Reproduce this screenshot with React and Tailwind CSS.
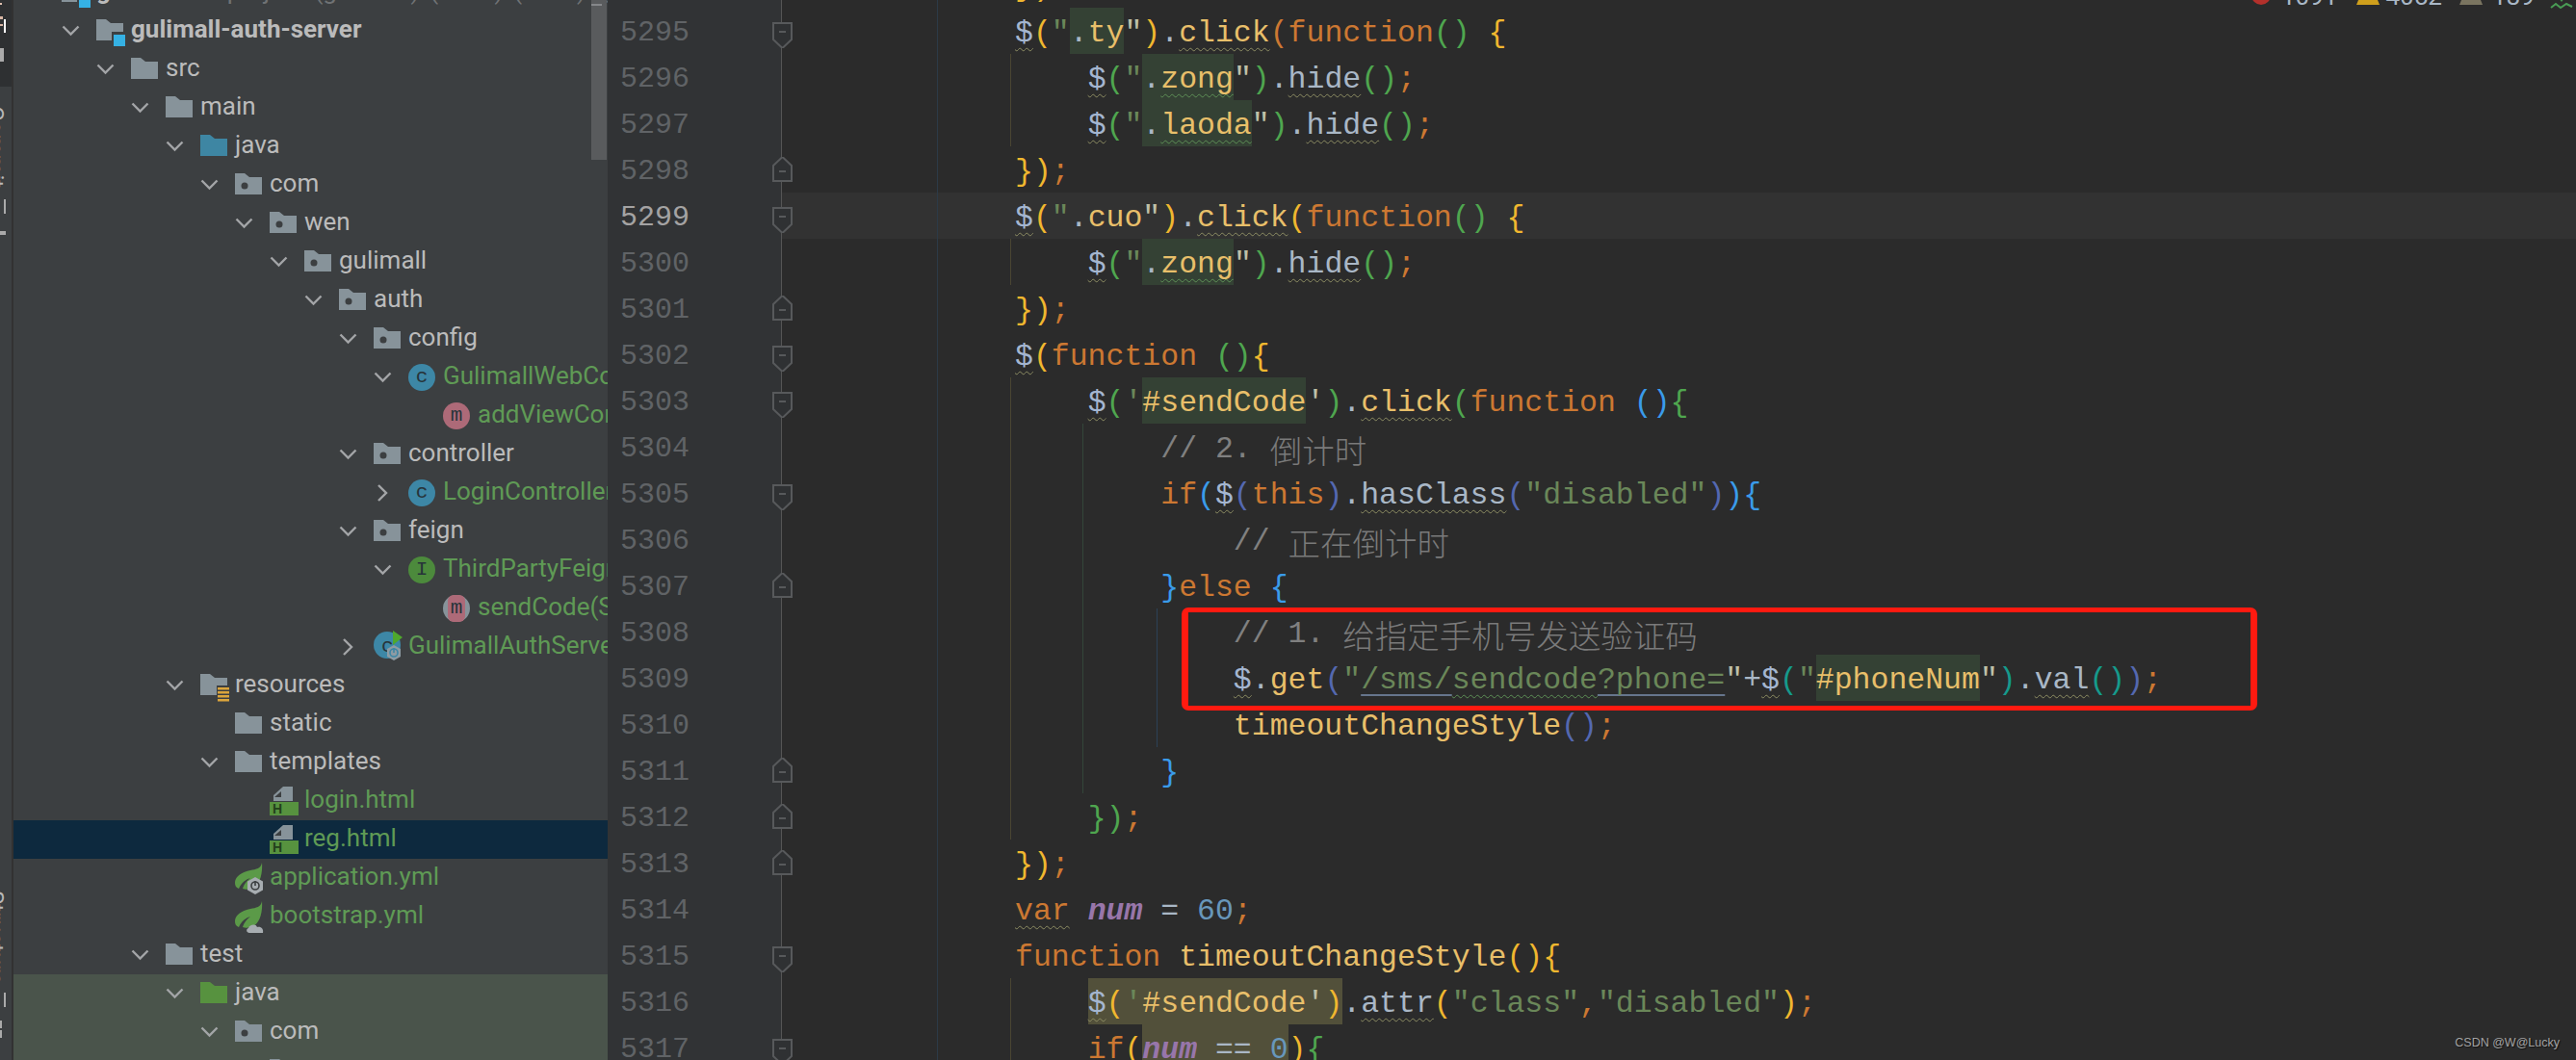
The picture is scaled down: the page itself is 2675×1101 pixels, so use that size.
import React from "react";

// tree: [level, name, icon, chevron, tone]
const tree = [
  [1, "src", "folder", "down"],
  [2, "main", "folder", "down"],
  [3, "java", "source", "down"],
  [4, "com", "pkg", "down"],
  [5, "wen", "pkg", "down"],
  [6, "gulimall", "pkg", "down"],
  [7, "auth", "pkg", "down"],
  [8, "config", "pkg", "down"],
  [9, "GulimallWebConfig", "class", "down", "green"],
  [10, "addViewControllers", "method", null, "green"],
  [8, "controller", "pkg", "down"],
  [9, "LoginController", "class", "right", "green"],
  [8, "feign", "pkg", "down"],
  [9, "ThirdPartyFeignService", "iface", "down", "green"],
  [10, "sendCode(String)", "absmethod", null, "green"],
  [8, "GulimallAuthServerApplication", "boot", "right", "green"],
  [3, "resources", "res", "down"],
  [4, "static", "folder", null],
  [4, "templates", "folder", "down"],
  [5, "login.html", "html", null, "green"],
  [5, "reg.html", "html", null, "green", "selected"],
  [4, "application.yml", "leafpower", null, "green"],
  [4, "bootstrap.yml", "leafcloud", null, "green"],
  [2, "test", "folder", "down"],
  [3, "java", "testsrc", "down", null, "test"],
  [4, "com", "pkg", "down", null, "test"],
  [5, "wen", "pkg", "down", null, "test"],
];

function Folder({ fill = "#87939a", children }) {
  return (
    <svg width="28" height="22" viewBox="0 0 28 22" className="-mt-[2px] overflow-visible">
      <path d="M0 0h10l5 4h13v18H0z" fill={fill} />
      {children}
    </svg>
  );
}

function Badge({ bg, letter, font = "text-[21px]" }) {
  return (
    <div className={`flex h-[28px] w-[28px] items-center justify-center rounded-full ${bg} ${font} font-['Liberation_Mono'] text-[#27343a]`}>
      {letter}
    </div>
  );
}

function Leaf({ children }) {
  return (
    <svg width="30" height="32" viewBox="0 0 30 32" className="overflow-visible">
      <path d="M28 0c-1 6-6 7-12 8C6 10 0 15 0 21c0 3 1 5 4 6 2-5 6-9 12-11-4 3-7 7-8 11 3 1 7 1 11-1 6-3 10-13 9-26z" fill="#5b9a48" />
      {children}
    </svg>
  );
}

function TreeIcon({ type }) {
  if (type === "folder") return <Folder />;
  if (type === "source") return <Folder fill="#3e86a3" />;
  if (type === "testsrc") return <Folder fill="#57923f" />;
  if (type === "pkg")
    return (
      <Folder>
        <circle cx="10" cy="13" r="3.500" fill="#3c3f41" />
      </Folder>
    );
  if (type === "res")
    return (
      <Folder>
        <path d="M17 12h13v12H17z" fill="#3c3f41" />
        <path d="M18 14h12v2.500H18zM18 18h12v2.500H18zM18 22h12v2.500H18zM18 26h12v2.500H18z" fill="#dba53c" />
      </Folder>
    );
  if (type === "class") return <Badge bg="bg-[#3d87a6]" letter="c" />;
  if (type === "method") return <Badge bg="bg-[#ad6a78]" letter="m" />;
  if (type === "iface") return <Badge bg="bg-[#4c8a3c]" letter="I" />;
  if (type === "absmethod")
    return (
      <div className="flex h-[28px] w-[28px] justify-center rounded-full bg-[#87939a]">
        <div className="flex h-[28px] w-[18px] items-center justify-center rounded-[6px] bg-[#ad6a78] font-['Liberation_Mono'] text-[21px] text-[#27343a]">m</div>
      </div>
    );
  if (type === "boot")
    return (
      <svg width="30" height="34" viewBox="0 0 30 34" className="overflow-visible">
        <circle cx="14" cy="15" r="14" fill="#3d87a6" />
        <text x="8" y="22" fontSize="21" fontFamily="Liberation Mono" fill="#27343a">c</text>
        <path d="M20 0l10 7-10 8z" fill="#4fa82d" />
        <path d="M21 15l7 4v8l-7 4-7-4v-8z" fill="#8d9ba3" />
        <circle cx="21" cy="23" r="4" fill="none" stroke="#3d87a6" strokeWidth="1.6" />
        <path d="M21 18v5" stroke="#3d87a6" strokeWidth="1.6" />
      </svg>
    );
  if (type === "html")
    return (
      <svg width="30" height="30" viewBox="0 0 30 30" className="overflow-visible">
        <path d="M14 0h10v15H4V9z" fill="#87939a" />
        <path d="M12 5v6H5z" fill="#3c3f41" />
        <path d="M0 16h30v14H0z" fill="#57923f" />
        <text x="3" y="28" fontSize="14" fontWeight="700" fontFamily="Liberation Sans" fill="#23401c">H</text>
      </svg>
    );
  if (type === "leafpower")
    return (
      <Leaf>
        <path d="M21 15l8 4.500v9l-8 4.500-8-4.500v-9z" fill="#a7adb1" />
        <circle cx="21" cy="24" r="4" fill="none" stroke="#3c3f41" strokeWidth="1.6" />
        <path d="M21 19v5" stroke="#3c3f41" strokeWidth="1.6" />
      </Leaf>
    );
  return (
    <Leaf>
      <path d="M15 33c-3 0-4-4-1-5 1-4 8-5 9-1 4-1 7 2 6 6z" fill="#a7adb1" />
    </Leaf>
  );
}

function Chevron({ dir }) {
  if (dir === "down")
    return (
      <svg width="19" height="12" viewBox="0 0 19 12">
        <path d="M1.500 1.500l8 8 8-8" fill="none" stroke="#a3a5a7" strokeWidth="2.400" />
      </svg>
    );
  return (
    <svg width="19" height="18" viewBox="0 0 19 18">
      <path d="M5 1l8 8-8 8" fill="none" stroke="#a3a5a7" strokeWidth="2.400" />
    </svg>
  );
}

function TreeRow({ row }) {
  const [level, name, icon, chevron, tone, state] = row;
  let bg = "";
  if (state === "selected") bg = "bg-[#0d293e]";
  if (state === "test") bg = "bg-[#4a544b]";
  return (
    <div className={`flex h-[40px] shrink-0 items-center whitespace-pre ${bg}`} style={{ paddingLeft: 50 + level * 36 }}>
      <div className="flex w-[36px] shrink-0 items-center">{chevron && <Chevron dir={chevron} />}</div>
      <div className="flex w-[36px] shrink-0 items-center">
        <TreeIcon type={icon} />
      </div>
      <span className={`pb-[3px] ${tone === "green" ? "text-[#5f9a55]" : "text-[#bbbbbb]"}`}>{name}</span>
    </div>
  );
}

function Sidebar() {
  return (
    <div className="relative h-full w-[617px] shrink-0 overflow-hidden bg-[#3c3f41] font-['Roboto'] text-[26px]">
      <div className="-mt-[28px] flex flex-col">
        <div className="flex h-[40px] shrink-0 items-center whitespace-pre pl-[50px]">
          <div className="w-[36px]" />
          <svg width="28" height="22" viewBox="0 0 28 22" className="-mt-[2px] overflow-visible">
            <path d="M0 0h10l5 4h13v9H16v9H0z" fill="#87939a" />
            <path d="M18 16h12v12H18z" fill="#35b1e4" />
          </svg>
          <span className="ml-[8px] pb-[3px] font-bold text-[#bbbbbb]">g</span>
          <span className="pb-[3px] text-[#6f7274]">ulimall  F:\project\(gulimall)\(2022)\(code)\(gulimall_g)</span>
        </div>
        <div className="flex h-[40px] shrink-0 items-center whitespace-pre pl-[50px]">
          <div className="flex w-[36px] shrink-0 items-center">
            <Chevron dir="down" />
          </div>
          <div className="flex w-[36px] shrink-0 items-center">
            <svg width="28" height="22" viewBox="0 0 28 22" className="-mt-[2px] overflow-visible">
              <path d="M0 0h10l5 4h13v9H16v9H0z" fill="#87939a" />
              <path d="M18 16h12v12H18z" fill="#35b1e4" />
            </svg>
          </div>
          <span className="pb-[3px] font-bold text-[#bbbbbb]">gulimall-auth-server</span>
        </div>
        {tree.map((row, i) => (
          <TreeRow key={i} row={row} />
        ))}
      </div>
      <div className="absolute right-[1px] top-0 h-[166px] w-[16px] bg-[#595b5d]">
        <div className="mt-[4px] h-[2px] w-[11px] bg-[#85878a]" />
      </div>
    </div>
  );
}

function LeftStrip() {
  return (
    <div className="relative flex h-full w-[14px] shrink-0 flex-col overflow-hidden border-r-2 border-[#323232] bg-[#3c3f41]">
      <div className="h-[90px] shrink-0 bg-[#2e3032]" />
      <div className="absolute left-0 top-[3px] h-[2px] w-[2px] bg-[#e0c0b0]" />
      <div className="absolute left-0 top-[17px] h-[3px] w-[3px] bg-[#d9b7a5]" />
      <div className="absolute left-0 top-[25px] h-[2px] w-[3px] bg-[#d9b7a5]" />
      <div className="absolute left-[4px] top-[20px] h-[14px] w-[2px] bg-white" />
      <div className="absolute left-0 top-[50px] h-[14px] w-[4px] bg-[#aaaaaa]" />
      <div className="absolute -left-[15px] top-[110px] font-['Roboto'] text-[24px] leading-[20px] text-[#b8b8b8] [writing-mode:vertical-rl]">Commit</div>
      <div className="absolute left-[4px] top-[207px] h-[15px] w-[2px] bg-[#aaaaaa]" />
      <div className="absolute left-0 top-[240px] h-[4px] w-[6px] bg-[#aaaaaa]" />
      <div className="absolute -left-[15px] top-[925px] font-['Roboto'] text-[24px] leading-[20px] text-[#b8b8b8] [writing-mode:vertical-rl]">Structure</div>
      <div className="absolute left-[4px] top-[1031px] h-[15px] w-[2px] bg-[#aaaaaa]" />
      <div className="absolute left-0 top-[1060px] h-[8px] w-[2px] bg-[#aaaaaa]" />
      <div className="absolute left-0 top-[1070px] h-[8px] w-[2px] bg-[#aaaaaa]" />
    </div>
  );
}

// gutter fold marks keyed by line number
const foldOpen = [5295, 5299, 5302, 5303, 5305, 5315, 5317];
const foldClose = [5298, 5301, 5307, 5311, 5312, 5313];

function FoldMark({ kind }) {
  const d = kind === "open" ? "M1 1h19v17l-9.500 9L1 18z" : "M1 25h19V9L10.500 0 1 9z";
  const dash = kind === "open" ? 10 : 15;
  return (
    <svg width="21" height="27" viewBox="0 0 21 27" className={`relative z-10 ml-[86px] shrink-0 ${kind === "open" ? "mt-[4px]" : "-mt-[5px]"}`}>
      <path d={d} fill="#2f3133" stroke="#57595b" strokeWidth="2" />
      <path d={`M7 ${dash}h7`} stroke="#57595b" strokeWidth="2" />
    </svg>
  );
}

function Gutter() {
  const lines = [];
  for (let n = 5294; n <= 5317; n++) lines.push(n);
  return (
    <div className="h-full w-[181px] shrink-0 border-r border-[#555555] bg-[#313335] font-['Liberation_Mono'] text-[30px]">
      <div className="-mt-[40px] flex flex-col">
        {lines.map((n) => (
          <div key={n} className="flex h-[48px] shrink-0 items-center pl-[13px] pt-[5px]">
            <span className={n === 5299 ? "text-[#a4a3a3]" : "text-[#606366]"}>{n}</span>
            {foldOpen.includes(n) && <FoldMark kind="open" />}
            {foldClose.includes(n) && <FoldMark kind="close" />}
          </div>
        ))}
      </div>
    </div>
  );
}

// token colours
const wave = "underline decoration-wavy decoration-1 underline-offset-[6px] [text-decoration-skip-ink:none] decoration-[#8c8c62]";
const waveGreen = "underline decoration-wavy decoration-1 underline-offset-[6px] [text-decoration-skip-ink:none] decoration-[#5d8f55]";
const solid = "underline decoration-2 underline-offset-[6px] [text-decoration-skip-ink:none] decoration-[#66758c]";
const hl = "bg-[#344134]";
const hw = "bg-[#52503a]";
const dollar = `text-[#a4b6d0] ${wave}`;
const kw = "text-[#cc7832]";
const tag = "text-[#e8bf6a]";
const base = "text-[#a9b7c6]";
const str = "text-[#6a8759]";
const pale = "text-[#bfc0a8]";
const yb = "text-[#f0b72f]";
const gb = "text-[#4fa64f]";
const bb = "text-[#3a9bea]";
const pb = "text-[#5468b0]";
const tb = "text-[#159a8c]";
const cm = "text-[#808080]";
const cjk = "text-[#7a7a7a] text-[33.5px] font-['Noto_Sans_CJK_SC'] font-light";
const num = "text-[#9876aa] italic font-bold";
const lit = "text-[#6897bb]";

const hide = [
  [".", base],
  ["hide", `${base} ${wave}`],
  ["(", gb],
  [")", gb],
  [";", kw],
];

const zong = [
  ["    "],
  ["$", dollar],
  ["(", gb],
  ['"', str],
  [".", `${base} ${hl}`],
  ["zong", `${tag} ${hl} ${waveGreen}`],
  ['"', pale],
  [")", gb],
  ...hide,
];

const closeFn = [
  ["}", yb],
  [")", yb],
  [";", kw],
];

const code = [
  closeFn,
  [
    ["$", dollar],
    ["(", yb],
    ['"', str],
    [".", `${base} ${hl}`],
    ["ty", `${tag} ${hl}`],
    ['"', pale],
    [")", yb],
    [".", base],
    ["click", `${tag} ${wave}`],
    ["(", kw],
    ["function", kw],
    ["(", gb],
    [")", gb],
    [" "],
    ["{", yb],
  ],
  zong,
  [
    ["    "],
    ["$", dollar],
    ["(", gb],
    ['"', str],
    [".", `${base} ${hl}`],
    ["laoda", `${tag} ${hl} ${waveGreen}`],
    ['"', pale],
    [")", gb],
    ...hide,
  ],
  closeFn,
  [
    ["$", dollar],
    ["(", yb],
    ['"', str],
    [".", base],
    ["cuo", tag],
    ['"', pale],
    [")", yb],
    [".", base],
    ["click", `${tag} ${wave}`],
    ["(", yb],
    ["function", kw],
    ["(", gb],
    [")", gb],
    [" "],
    ["{", yb],
  ],
  zong,
  closeFn,
  [
    ["$", dollar],
    ["(", yb],
    ["function", kw],
    [" "],
    ["(", gb],
    [")", gb],
    ["{", yb],
  ],
  [
    ["    "],
    ["$", dollar],
    ["(", gb],
    ["'", str],
    ["#sendCode", `${tag} ${hl}`],
    ["'", pale],
    [")", gb],
    [".", base],
    ["click", `${tag} ${wave}`],
    ["(", gb],
    ["function", kw],
    [" "],
    ["(", bb],
    [")", bb],
    ["{", gb],
  ],
  [
    ["        "],
    ["// 2. ", cm],
    ["倒计时", cjk],
  ],
  [
    ["        "],
    ["if", kw],
    ["(", bb],
    ["$", dollar],
    ["(", pb],
    ["this", kw],
    [")", pb],
    [".", base],
    ["hasClass", `${base} ${wave}`],
    ["(", pb],
    ['"disabled"', str],
    [")", pb],
    [")", bb],
    ["{", bb],
  ],
  [
    ["            "],
    ["// ", cm],
    ["正在倒计时", cjk],
  ],
  [
    ["        "],
    ["}", bb],
    ["else", kw],
    [" "],
    ["{", bb],
  ],
  [
    ["            "],
    ["// 1. ", cm],
    ["给指定手机号发送验证码", cjk],
  ],
  [
    ["            "],
    ["$", dollar],
    [".", base],
    ["get", tag],
    ["(", pb],
    ['"', str],
    ["/sms/", `${str} ${solid}`],
    ["sendcode", `${str} ${waveGreen}`],
    ["?phone=", `${str} ${solid}`],
    ['"', pale],
    ["+", base],
    ["$", dollar],
    ["(", tb],
    ['"', str],
    ["#phoneNum", `${tag} ${hl}`],
    ['"', pale],
    [")", tb],
    [".", base],
    ["val", `${base} ${wave}`],
    ["(", tb],
    [")", tb],
    [")", pb],
    [";", kw],
  ],
  [
    ["            "],
    ["timeoutChangeStyle", tag],
    ["(", pb],
    [")", pb],
    [";", kw],
  ],
  [
    ["        "],
    ["}", bb],
  ],
  [
    ["    "],
    ["}", gb],
    [")", gb],
    [";", kw],
  ],
  closeFn,
  [
    ["var", `${kw} ${wave}`],
    [" "],
    ["num", num],
    [" "],
    ["=", base],
    [" "],
    ["60", lit],
    [";", kw],
  ],
  [
    ["function", kw],
    [" "],
    ["timeoutChangeStyle", tag],
    ["(", yb],
    [")", yb],
    ["{", yb],
  ],
  [
    ["    "],
    ["$", `${dollar} ${hw}`],
    ["(", `${yb} ${hw}`],
    ["'", `${str} ${hw}`],
    ["#sendCode", `${tag} ${hw}`],
    ["'", `${pale} ${hw}`],
    [")", `${yb} ${hw}`],
    [".", base],
    ["attr", `${base} ${wave}`],
    ["(", yb],
    ['"class"', str],
    [",", kw],
    ['"disabled"', str],
    [")", yb],
    [";", kw],
  ],
  [
    ["    "],
    ["if", kw],
    ["(", yb],
    ["num", `${num} ${hw}`],
    [" ", hw],
    ["==", `${base} ${hw}`],
    [" ", hw],
    ["0", `${lit} ${hw}`],
    [")", yb],
    ["{", gb],
  ],
];

// rainbow indent guides, all relative to the code column
const guides = [
  "left-[237px] top-[56px] h-[96px] bg-[#4a4632]",
  "left-[237px] top-[248px] h-[48px] bg-[#4a4632]",
  "left-[237px] top-[392px] h-[480px] bg-[#4a4632]",
  "left-[237px] top-[1016px] h-[85px] bg-[#4a4632]",
  "left-[312px] top-[440px] h-[384px] bg-[#33463a]",
  "left-[389px] top-[632px] h-[144px] bg-[#2c4257]",
];

function CodeArea() {
  return (
    <div className="relative h-full min-w-0 flex-1 overflow-hidden bg-[#2b2b2b] font-['Liberation_Mono'] text-[31.5px]">
      <div className="-mt-[40px] flex flex-col">
        {code.map((tokens, i) => (
          <div key={i} className={`flex h-[48px] shrink-0 whitespace-pre pl-[242px] leading-[54px] ${i === 5 ? "bg-[#323232]" : ""}`}>
            {tokens.map(([text, cls], j) => (
              <span key={j} className={`block h-[48px] ${cls || ""}`}>
                {text}
              </span>
            ))}
          </div>
        ))}
      </div>

      <div className="absolute left-[161px] top-0 h-full w-px bg-[#2c3a47]" />
      {guides.map((g) => (
        <div key={g} className={`absolute w-px ${g}`} />
      ))}

      {/* red box drawn over the screenshot */}
      <div className="absolute left-[415px] top-[631px] h-[107px] w-[1117px] rounded-[7px] border-x-[7px] border-y-[5px] border-[#ff1a10]" />

      {/* inspection widget, mostly scrolled off */}
      <div className="absolute left-[1526px] -top-[25px] flex h-[36px] items-end font-['Roboto'] text-[26px] leading-[30px] text-[#a9b7c6]">
        <svg width="20" height="32" viewBox="0 0 20 32" className="self-start">
          <circle cx="10" cy="20" r="10" fill="#b3302b" />
        </svg>
        <span className="ml-[11px]">1091</span>
        <svg width="24" height="32" viewBox="0 0 24 32" className="ml-[20px] self-start">
          <path d="M12 0l12 30H0z" fill="#cf9f1c" />
        </svg>
        <span className="ml-[6px]">4052</span>
        <svg width="24" height="32" viewBox="0 0 24 32" className="ml-[18px] self-start">
          <path d="M12 0l12 30H0z" fill="#7a7460" />
        </svg>
        <span className="ml-[10px]">189</span>
        <svg width="24" height="36" viewBox="0 0 24 36" className="ml-[16px] self-start">
          <path d="M1 33l5-4 5 4 6-4 6 3" fill="none" stroke="#499c54" strokeWidth="2" />
          <path d="M7 20h10l-5 7z" fill="#499c54" />
        </svg>
        <span className="ml-[12px]">1</span>
      </div>

      <div className="absolute bottom-[11px] right-[17px] font-['Liberation_Sans'] text-[12.5px] leading-[14px] text-[#a3a3a3] [text-shadow:1px_1px_1px_#111111]">
        CSDN @W@Lucky
      </div>
    </div>
  );
}

export default function App() {
  return (
    <div className="flex h-[1101px] w-[2675px] overflow-hidden">
      <LeftStrip />
      <Sidebar />
      <Gutter />
      <CodeArea />
    </div>
  );
}
